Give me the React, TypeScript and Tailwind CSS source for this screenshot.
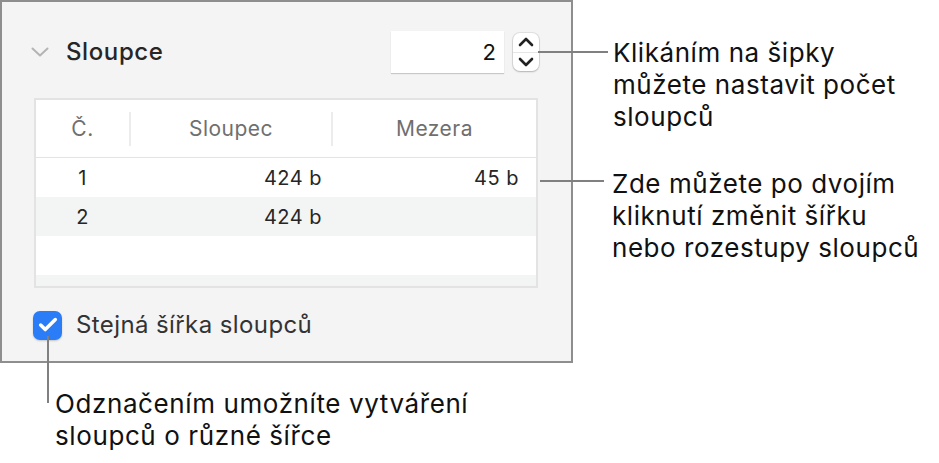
import { Check } from 'lucide-react'

const rows = [
  { n: '1', width: '424 b', gap: '45 b' },
  { n: '2', width: '424 b', gap: '' },
  { n: '', width: '', gap: '' },
  { n: '', width: '', gap: '' },
]

function Chevron({ up = false, className = '' }: { up?: boolean; className?: string }) {
  return (
    <svg width="16" height="10" viewBox="0 0 16 10" className={className}>
      <path
        d={up ? 'M2 8 L8 2 L14 8' : 'M2 2 L8 8 L14 2'}
        fill="none"
        stroke="currentColor"
        strokeWidth="2.6"
        strokeLinecap="round"
        strokeLinejoin="round"
      />
    </svg>
  )
}

function Stepper() {
  return (
    <div className="ml-[9px] flex h-[38px] w-[26px] flex-col items-center justify-between rounded-[7px] bg-white py-[4px] shadow-[0_0_0_1px_rgba(0,0,0,0.08),0_1px_2px_rgba(0,0,0,0.2)]">
      <Chevron up className="text-[#222]" />
      <div className="h-px w-full bg-[#e6e6e6]" />
      <Chevron className="text-[#222]" />
    </div>
  )
}

export default function App() {
  return (
    <div className="relative h-[463px] w-[939px] overflow-hidden bg-white font-['Inter','Liberation_Sans',sans-serif]">
      {/* Inspector panel */}
      <div className="h-[363px] w-[573px] border-2 border-[#8e8e8e] bg-[#f4f4f4]">
        <div className="mt-[29px] flex h-[42px] items-center pl-[29px]">
          <svg width="18" height="10" viewBox="0 0 18 10" className="text-[#b4b4b4]">
            <path d="M1.5 1.5 L9 8.5 L16.5 1.5" fill="none" stroke="currentColor" strokeWidth="2" strokeLinecap="round" strokeLinejoin="round" />
          </svg>
          <span className="ml-[17px] text-[24px] font-medium tracking-[0.6px] text-[#262626]">Sloupce</span>
          <div className="ml-auto flex h-[42px] w-[113px] items-center justify-end bg-white pr-[8px] text-[22px] text-[#111] shadow-[0_1px_1px_rgba(0,0,0,0.18)]">
            2
          </div>
          <Stepper />
          <div className="w-[32px]" />
        </div>

        {/* Column table */}
        <div className="ml-[32px] mt-[25px] h-[190px] w-[504px] overflow-hidden border-2 border-[#e3e3e3] bg-white">
          <div className="grid h-[58px] grid-cols-[93px_202px_1fr] items-center border-b border-[#e3e3e3] text-[21px] tracking-[0.5px] text-[#6f6f6f]">
            <div className="text-center">Č.</div>
            <div className="flex h-[34px] items-center justify-center border-l-2 border-[#ececec]">Sloupec</div>
            <div className="flex h-[34px] items-center justify-center border-l-2 border-[#ececec]">Mezera</div>
          </div>
          {rows.map((r, i) => (
            <div
              key={i}
              className={`grid h-[39px] grid-cols-[93px_202px_1fr] items-center text-[20px] tracking-[0.5px] text-[#262626] ${i % 2 === 1 ? 'bg-[#f3f4f4]' : 'bg-white'}`}
            >
              <div className="text-center">{r.n}</div>
              <div className="pr-[9px] text-right">{r.width}</div>
              <div className="pr-[17px] text-right">{r.gap}</div>
            </div>
          ))}
        </div>

        <label className="ml-[31px] mt-[19px] flex items-center">
          <span className="flex h-[29px] w-[29px] items-center justify-center rounded-[7px] bg-[#2a7cf7] shadow-[0_1px_2px_rgba(0,0,0,0.2)]">
            <Check size={22} strokeWidth={3.8} className="text-white" />
          </span>
          <span className="ml-[14px] text-[24px] tracking-[0.4px] text-[#333]">Stejná šířka sloupců</span>
        </label>
      </div>

      {/* Callout lines */}
      <div className="absolute left-[538px] top-[51px] h-[2px] w-[70px] bg-[#808080]" />
      <div className="absolute left-[540px] top-[180px] h-[2px] w-[64px] bg-[#808080]" />
      <div className="absolute left-[47px] top-[336px] h-[67px] w-[2px] bg-[#808080]" />

      {/* Callout texts */}
      <div className="absolute left-[613px] top-[37px] text-[26px] leading-[32px] tracking-[0.55px] text-[#111]">
        Klikáním na šipky<br />můžete nastavit počet<br />sloupců
      </div>
      <div className="absolute left-[612px] top-[168px] text-[26px] leading-[32px] tracking-[0.55px] text-[#111]">
        Zde můžete po dvojím<br />kliknutí změnit šířku<br />nebo rozestupy sloupců
      </div>
      <div className="absolute left-[55px] top-[388px] text-[26px] leading-[32px] tracking-[0.6px] text-[#111]">
        Odznačením umožníte vytváření<br />sloupců o různé šířce
      </div>
    </div>
  )
}
